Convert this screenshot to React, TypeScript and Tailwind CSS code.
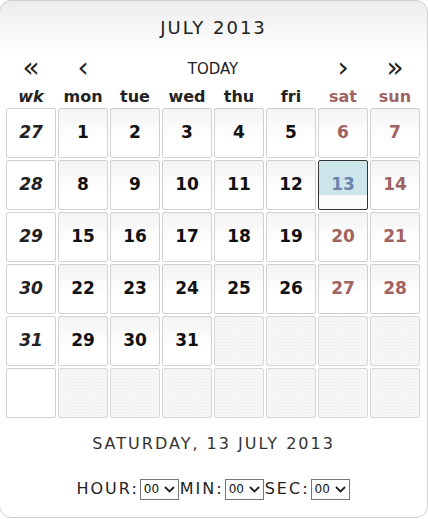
import { ReactNode } from 'react';

const font = { fontFamily: '"DejaVu Sans", Verdana, sans-serif' };

type Cell = { n?: number; kind: 'day' | 'wkend' | 'sel' | 'empty' };

const weeks: { wk?: number; days: Cell[] }[] = [
  { wk: 27, days: [1, 2, 3, 4, 5].map((n) => ({ n, kind: 'day' as const })).concat([{ n: 6, kind: 'wkend' }, { n: 7, kind: 'wkend' }]) },
  { wk: 28, days: [8, 9, 10, 11, 12].map((n) => ({ n, kind: 'day' as const })).concat([{ n: 13, kind: 'sel' }, { n: 14, kind: 'wkend' }]) },
  { wk: 29, days: [15, 16, 17, 18, 19].map((n) => ({ n, kind: 'day' as const })).concat([{ n: 20, kind: 'wkend' }, { n: 21, kind: 'wkend' }]) },
  { wk: 30, days: [22, 23, 24, 25, 26].map((n) => ({ n, kind: 'day' as const })).concat([{ n: 27, kind: 'wkend' }, { n: 28, kind: 'wkend' }]) },
  { wk: 31, days: [29, 30, 31].map((n) => ({ n, kind: 'day' as const })).concat([0, 0, 0, 0].map(() => ({ kind: 'empty' as const }))) },
  { days: [0, 0, 0, 0, 0, 0, 0].map(() => ({ kind: 'empty' as const })) },
];

function DayCell({ cell }: { cell: Cell }) {
  if (cell.kind === 'empty') {
    return (
      <div className="h-[50px] rounded-[2px] border border-[#d6d6d6] bg-[#f6f6f6] bg-[radial-gradient(#ececec_0.7px,transparent_0.8px)] bg-size-[3px_3px]" />
    );
  }
  if (cell.kind === 'sel') {
    return (
      <div className="h-[50px] rounded-[2px] border border-[#333] bg-linear-to-b from-[#cce5ea] from-70% to-[#fbfbfb] to-70% flex items-center justify-center text-[17px] font-bold text-[#6a85ab]">
        {cell.n}
      </div>
    );
  }
  return (
    <div
      className={`h-[50px] rounded-[2px] border border-[#d0d0d0] bg-linear-to-b from-[#f3f3f3] to-white to-60% flex items-center justify-center text-[17px] font-bold ${
        cell.kind === 'wkend' ? 'text-[#a06262]' : 'text-[#111]'
      }`}
    >
      {cell.n}
    </div>
  );
}

function TimeSelect() {
  return (
    <div className="relative mx-[1px] inline-flex">
      <select className="appearance-none w-[39px] h-[21px] border border-[#777] bg-white pl-[3px] text-[12px] leading-none text-[#111] tracking-normal outline-none" style={font}>
        <option>00</option>
      </select>
      <svg className="absolute right-[4px] top-[7px] pointer-events-none" width="11" height="7" viewBox="0 0 11 7">
        <path d="M1 1 L5.5 5.5 L10 1" fill="none" stroke="#222" strokeWidth="1.8" />
      </svg>
    </div>
  );
}

function Nav({ children, className = '' }: { children: ReactNode; className?: string }) {
  return <div className={`flex items-center justify-center text-[#222] ${className}`}>{children}</div>;
}

export default function App() {
  return (
    <div className="w-[428px] h-[519px] bg-white overflow-hidden" style={font}>
      <div className="ml-[-1px] w-[429px] h-[518px] rounded-[12px] border border-[#cfcfcf] bg-[linear-gradient(to_bottom,#ececec_0px,#ffffff_52px)] flex flex-col">
        <div className="h-[53px] flex items-center justify-center text-[18px] tracking-[2px] text-[#222]">JULY 2013</div>

        <div className="pl-[6px] grid grid-cols-[repeat(8,50px)] gap-x-[2px] h-[28px]">
          <Nav className="text-[28px] leading-none pb-[3px]">«</Nav>
          <Nav className="text-[28px] leading-none pb-[3px]">‹</Nav>
          <Nav className="col-span-4 text-[15px]">TODAY</Nav>
          <Nav className="text-[28px] leading-none pb-[3px]">›</Nav>
          <Nav className="text-[28px] leading-none pb-[3px]">»</Nav>
        </div>

        <div className="pl-[6px] pt-[3px] grid grid-cols-[repeat(8,50px)] gap-x-[2px] h-[26px] text-[16px] font-bold">
          <div className="flex items-center justify-center italic text-[#222]">wk</div>
          {['mon', 'tue', 'wed', 'thu', 'fri'].map((d) => (
            <div key={d} className="flex items-center justify-center text-[#222]">{d}</div>
          ))}
          <div className="flex items-center justify-center text-[#a06262]">sat</div>
          <div className="flex items-center justify-center text-[#a06262]">sun</div>
        </div>

        <div className="pl-[6px] grid grid-cols-[repeat(8,50px)] gap-[2px]">
          {weeks.map((w, i) => [
            <div key={`wk${i}`} className="h-[50px] rounded-[2px] border border-[#d0d0d0] bg-white flex items-center justify-center text-[17px] font-bold italic text-[#222]">
              {w.wk}
            </div>,
            ...w.days.map((c, j) => <DayCell key={`${i}-${j}`} cell={c} />),
          ])}
        </div>

        <div className="h-[50px] pt-[2px] flex items-center justify-center text-[16px] tracking-[2px] text-[#333]">
          SATURDAY, 13 JULY 2013
        </div>

        <div className="h-[42px] flex items-center justify-center text-[16px] tracking-[2px] text-[#222]">
          <span>HOUR:</span>
          <TimeSelect />
          <span>MIN:</span>
          <TimeSelect />
          <span>SEC:</span>
          <TimeSelect />
        </div>
      </div>
    </div>
  );
}
